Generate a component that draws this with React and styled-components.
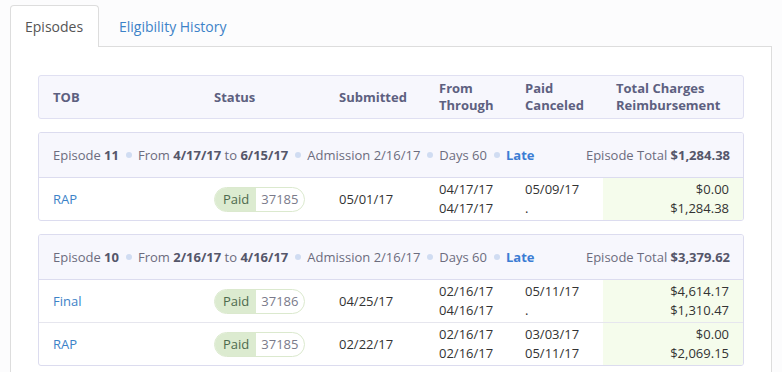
import React from "react"
import styled, { createGlobalStyle } from "styled-components"

const Global = createGlobalStyle`
  *, *::before, *::after {
    box-sizing: border-box;
  }
  body {
    margin: 0;
    background: #fcfcfd;
    font-family: "Open Sans", "Liberation Sans", sans-serif;
    font-size: 13px;
    color: #333;
  }
`

const Page = styled.div`
  padding: 5px 10px 0 10px;
`

const Tabs = styled.div`
  display: flex;
  height: 42px;
  border-bottom: 1px solid #dddddd;
`

const Tab = styled.div`
  display: flex;
  align-items: center;
  padding: 0 15px 0 ${p => (p.active ? "14px" : "19px")};
  font-size: 14px;
  color: ${p => (p.active ? "#555" : "#3c82c8")};
  background: ${p => (p.active ? "#fff" : "transparent")};
  border: 1px solid ${p => (p.active ? "#dddddd" : "transparent")};
  border-bottom: none;
  border-radius: 4px 4px 0 0;
  height: 42px;
  width: ${p => (p.active ? "89px" : "auto")};
`

const Panel = styled.div`
  background: #fff;
  border: 1px solid #dddddd;
  border-top: none;
  padding: 28px 27px 20px 27px;
  min-height: 340px;
`

const cols = "161px 125px 100px 86px 78px 1fr"

const HeadRow = styled.div`
  display: grid;
  grid-template-columns: ${cols};
  padding-left: 14px;
  height: 44px;
  align-items: center;
  background: #f7f7fd;
  border: 1px solid #e0e0f2;
  border-radius: 3px;
  font-weight: 700;
  color: #5d6080;
  line-height: 17px;
`

const HeadCell = styled.div`
  padding-left: ${p => (p.pad ? "13px" : "0")};
`

const Card = styled.div`
  margin-top: 13px;
  border: 1px solid #dcdcef;
  border-radius: 3px;
  overflow: hidden;
`

const EpHeader = styled.div`
  display: flex;
  align-items: center;
  height: 45px;
  padding: 0 13px 0 14px;
  background: #f7f7fd;
  border-bottom: 1px solid #dcdcef;
  color: #6c6c7e;
  b {
    color: #55566a;
    font-weight: 700;
  }
`

const Dot = styled.span`
  display: inline-block;
  width: 6px;
  height: 6px;
  border-radius: 50%;
  background: #d0dcf2;
  margin: 0 6px 0 7px;
`

const Late = styled.b`
  && {
    color: #3c7dd4;
  }
`

const Total = styled.div`
  margin-left: auto;
`

const Row = styled.div`
  display: grid;
  grid-template-columns: ${cols};
  padding-left: 14px;
  height: ${p => (p.first ? "42px" : "43px")};
  align-items: stretch;
  border-top: ${p => (p.first ? "none" : "1px solid #e6e6ee")};
  line-height: 19px;
`

const Cell = styled.div`
  display: flex;
  flex-direction: column;
  justify-content: center;
`

const Link = styled(Cell)`
  color: #3c82c8;
`

const Money = styled(Cell)`
  background: #f5fcec;
  align-items: flex-end;
  padding-right: 14px;
`

const Pill = styled.div`
  display: flex;
  align-self: flex-start;
  height: 25px;
  border: 1px solid #dbe9ce;
  border-radius: 13px;
  overflow: hidden;
  line-height: 23px;
`

const PillLabel = styled.span`
  background: #dcebd0;
  color: #4d6a4d;
  padding: 0 7px 0 8px;
`

const PillNum = styled.span`
  color: #7a7a8a;
  padding: 0 6px 0 5px;
`

const episodes = [
  {
    num: 11, from: "4/17/17", to: "6/15/17", adm: "2/16/17", days: 60, total: "$1,284.38",
    rows: [
      { tob: "RAP", id: "37185", sub: "05/01/17", f: ["04/17/17", "04/17/17"], p: ["05/09/17", "."], m: ["$0.00", "$1,284.38"] },
    ],
  },
  {
    num: 10, from: "2/16/17", to: "4/16/17", adm: "2/16/17", days: 60, total: "$3,379.62",
    rows: [
      { tob: "Final", id: "37186", sub: "04/25/17", f: ["02/16/17", "04/16/17"], p: ["05/11/17", "."], m: ["$4,614.17", "$1,310.47"] },
      { tob: "RAP", id: "37185", sub: "02/22/17", f: ["02/16/17", "02/16/17"], p: ["03/03/17", "05/11/17"], m: ["$0.00", "$2,069.15"] },
    ],
  },
]

export default function App() {
  return (
    <Page>
      <Global />
      <Tabs>
        <Tab active>Episodes</Tab>
        <Tab>Eligibility History</Tab>
      </Tabs>
      <Panel>
        <HeadRow>
          <HeadCell>TOB</HeadCell>
          <HeadCell>Status</HeadCell>
          <HeadCell>Submitted</HeadCell>
          <HeadCell>From<br />Through</HeadCell>
          <HeadCell>Paid<br />Canceled</HeadCell>
          <HeadCell pad>Total Charges<br />Reimbursement</HeadCell>
        </HeadRow>
        {episodes.map(ep => (
          <Card key={ep.num}>
            <EpHeader>
              Episode&nbsp;<b>{ep.num}</b>
              <Dot />
              From&nbsp;<b>{ep.from}</b>&nbsp;to&nbsp;<b>{ep.to}</b>
              <Dot />
              Admission {ep.adm}
              <Dot />
              Days {ep.days}
              <Dot />
              <Late>Late</Late>
              <Total>Episode Total <b>{ep.total}</b></Total>
            </EpHeader>
            {ep.rows.map((r, i) => (
              <Row key={i} first={i === 0}>
                <Link>{r.tob}</Link>
                <Cell>
                  <Pill>
                    <PillLabel>Paid</PillLabel>
                    <PillNum>{r.id}</PillNum>
                  </Pill>
                </Cell>
                <Cell>{r.sub}</Cell>
                <Cell><div>{r.f[0]}</div><div>{r.f[1]}</div></Cell>
                <Cell><div>{r.p[0]}</div><div>{r.p[1]}</div></Cell>
                <Money><div>{r.m[0]}</div><div>{r.m[1]}</div></Money>
              </Row>
            ))}
          </Card>
        ))}
      </Panel>
    </Page>
  )
}
